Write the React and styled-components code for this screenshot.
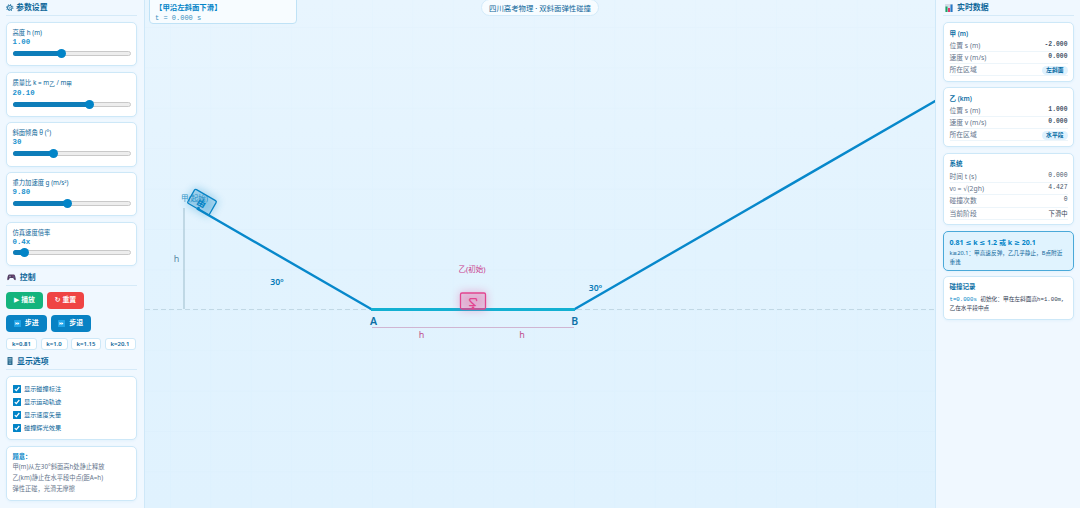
import React, { useState } from "react";
import styled, { createGlobalStyle, css } from "styled-components";

const sans = `"Noto Sans", "DejaVu Sans", "Noto Sans CJK SC", sans-serif`;
const mono = `"Liberation Mono", "Noto Sans CJK SC", monospace`;

const GlobalStyle = createGlobalStyle`
  * {
    box-sizing: border-box;
  }

  body {
    margin: 0;
    overflow: hidden;
    font-family: ${sans};
    color: #0c6699;
  }
`;

const Page = styled.div`
  display: grid;
  grid-template-columns: 145px 1fr 145px;
  height: 508px;
  background: #e3f3fe;
`;

const Panel = styled.aside`
  display: flex;
  flex-direction: column;
  min-width: 0;
  height: 508px;
  overflow: hidden;
  background: #f0f8ff;
  padding: ${(p) => (p.$right ? "0 6px 0 7px" : "0 7.5px 0 6px")};
  border-right: ${(p) => (p.$right ? "none" : "1px solid #cfe8f8")};
  border-left: ${(p) => (p.$right ? "1px solid #cfe8f8" : "none")};
  box-shadow: 0 0 6px rgba(2, 132, 199, 0.06);
`;

const Heading = styled.h2`
  display: flex;
  align-items: center;
  gap: ${(p) => p.$gap || 4}px;
  flex: none;
  height: ${(p) => p.$height || 16}px;
  margin: 0 0 6px;
  padding-top: ${(p) => p.$drop || 0}px;
  padding-left: ${(p) => p.$indent || 0}px;
  border-bottom: 1px solid #d5eaf8;
  font-size: 7.9px;
  line-height: 13px;
  font-weight: 600;
  color: #0c6699;

  svg {
    flex: none;
  }
`;

const Card = styled.section`
  flex: none;
  height: ${(p) => p.$height}px;
  margin-bottom: ${(p) => p.$gap || 6}px;
  padding: 0 5.5px;
  border: 1px solid #cde8f8;
  border-radius: 5px;
  background: #fff;
  box-shadow: 0 1px 3px rgba(2, 132, 199, 0.06);
`;

const Label = styled.div`
  padding-top: 5px;
  height: ${(p) => (p.$tall ? 16.5 : 15)}px;
  font-size: 6.3px;
  line-height: 10px;
  white-space: nowrap;

  sub {
    font-size: 5.6px;
    line-height: 0;
    vertical-align: -1.3px;
  }
`;

const Value = styled.div`
  height: 9px;
  font: 600 7.4px/9px ${mono};
  color: #2292cd;
`;

const Track = styled.div`
  position: relative;
  width: 118px;
  height: 5px;
  margin-top: 3.5px;
  border: 1px solid #c9c9c9;
  border-radius: 3px;
  background: #ededed;
`;

const Fill = styled.div`
  height: 5px;
  margin: -1px;
  border-radius: 3px;
  background: #0e7db9;
`;

const Thumb = styled.div`
  position: absolute;
  top: -3px;
  width: 9px;
  height: 9px;
  margin-left: -5px;
  border-radius: 50%;
  background: #0284c7;
`;

const ButtonRow = styled.div`
  display: flex;
  flex: none;
  gap: 4px;
  margin-bottom: 6px;
`;

const colors = { play: "#14b47d", reset: "#ef4444", step: "#0882c4" };

const Button = styled.button`
  display: flex;
  align-items: center;
  justify-content: center;
  gap: ${(p) => (p.$kind === "step" ? 4 : 2)}px;
  width: ${(p) => (p.$kind === "step" ? 40.5 : 37)}px;
  height: 17px;
  padding: 0;
  border: none;
  border-radius: 4px;
  background: ${(p) => colors[p.$kind]};
  color: #fff;
  font: 600 6.9px/12px ${sans};
  white-space: nowrap;
`;

const Presets = styled.div`
  display: grid;
  grid-template-columns: 31px 27px 30px 31px;
  gap: 3.5px;
  flex: none;
`;

const Preset = styled.button`
  height: 12.5px;
  padding: 0;
  border: 1px solid #cde8f8;
  border-radius: 3px;
  background: #fff;
  color: #0c6699;
  font: 600 6px/10px ${sans};
  white-space: nowrap;
`;

const Options = styled(Card)`
  display: flex;
  flex-direction: column;
  gap: 5px;
  padding-top: 7.5px;
`;

const Option = styled.label`
  display: flex;
  align-items: center;
  gap: 3.5px;
  height: 8px;
  font-size: 6.2px;
  line-height: 8px;
`;

const Check = styled.span`
  display: grid;
  place-items: center;
  width: 8px;
  height: 8px;
  border-radius: 1px;
  background: ${(p) => (p.$on ? "#0284c7" : "#fff")};
  box-shadow: inset 0 0 0 1px #0284c7;
`;

const Note = styled(Card)`
  padding-top: 4.5px;
  font-size: 6.25px;
  line-height: 10.7px;
  color: #64748b;
  white-space: nowrap;

  b {
    color: #0284c7;
  }
`;

const CardTitle = styled.h3`
  margin: 0;
  padding-top: 5.5px;
  height: 17px;
  font-size: 6.5px;
  line-height: 10px;
  font-weight: 600;
  color: #0c6fa5;
`;

const Row = styled.div`
  display: flex;
  justify-content: space-between;
  height: ${(p) => p.$height || 12}px;
  border-bottom: 1px solid #edf5fa;
  font-size: 6.8px;
  line-height: 12.5px;
  color: #64748b;
  white-space: nowrap;

  small {
    font-size: 5px;
  }
`;

const Reading = styled.span`
  font: 600 6.4px/9px ${mono};
  color: #475569;
  ${(p) =>
    p.$light &&
    css`
      font-weight: 400;
    `}
`;

const Phase = styled.span`
  font-size: 6.3px;
  line-height: 12px;
  color: #334155;
`;

const Badge = styled.span`
  height: 9px;
  margin-top: 1.5px;
  padding: 0 4px;
  border-radius: 5px;
  background: #dff2fe;
  color: #0369a1;
  font-size: 5.8px;
  line-height: 9px;
  font-weight: 600;
`;

const Verdict = styled(Card)`
  padding-top: 5px;
  border-color: #4aa9d9;
  background: #e0f3fe;
  font-size: 5.65px;
  line-height: 8.2px;

  h3 {
    margin: 0 0 1px;
    font-size: 7.05px;
    line-height: 11px;
    color: #0284c7;
    white-space: nowrap;
  }
`;

const Log = styled.p`
  margin: 2.5px 0 0;
  font: 5.7px/8.3px ${mono};
  color: #334155;
  white-space: nowrap;

  span {
    color: #0284c7;
  }
`;

const Stage = styled.main`
  position: relative;
  min-width: 0;
`;

const Scene = styled.svg`
  display: block;
  font-family: ${sans};
`;

const PhaseBox = styled.div`
  position: absolute;
  top: -4px;
  left: 4px;
  width: 148px;
  height: 28px;
  padding: 4px 5px 0;
  border: 1px solid #bfe2f6;
  border-radius: 4px;
  background: #f7fcff;
  font-size: 7.4px;
  line-height: 12px;
  font-weight: 700;
  color: #0284c7;

  div {
    padding-top: 1px;
    font: 7px/9px ${mono};
    color: #3a8fbd;
  }
`;

const TopicPill = styled.div`
  position: absolute;
  top: -1px;
  left: 336px;
  width: 118px;
  height: 17px;
  border: 1px solid #d3ebfa;
  border-radius: 9px;
  background: #f7fcff;
  text-align: center;
  font-size: 7.4px;
  line-height: 16px;
  white-space: nowrap;
`;

const GearIcon = () => (
  <svg width="7.500" height="7.500" viewBox="0 0 14 14" fill="none" stroke="#0c6699">
    <circle cx="7" cy="7" r="4.300" strokeWidth="1.800" />
    <circle cx="7" cy="7" r="6" strokeWidth="1.800" strokeDasharray="2 2.700" />
    <circle cx="7" cy="7" r="1.300" strokeWidth="1" />
  </svg>
);

const GamepadIcon = () => (
  <svg width="9" height="8" viewBox="0 0 18 16">
    <path
      d="M4 3h10c2 0 3 5 3.500 9 .3 3-2.500 3-4 0l-1-2h-7l-1 2c-1.500 3-4.300 3-4 0C1 8 2 3 4 3z"
      fill="#513b62"
    />
    <path d="M4 7h4M6 5v4" stroke="#a7a0b4" strokeWidth="1.200" />
    <circle cx="12" cy="6" r="1" fill="#d45687" />
    <circle cx="14" cy="8" r="1" fill="#5d94ce" />
  </svg>
);

const SliderIcon = () => (
  <svg width="6" height="8" viewBox="0 0 12 16">
    <rect x="1" y="0" width="10" height="16" rx="1" fill="#326f91" />
    <path d="M3 3h6M3 6h6" stroke="#b8d9e9" strokeWidth="1.300" />
    <path d="M4 10h4M4 13h4" stroke="#80b4d0" strokeWidth="1.500" />
  </svg>
);

const ChartIcon = () => (
  <svg width="8" height="8" viewBox="0 0 16 16">
    <rect width="16" height="16" rx="1" fill="#d3dde8" />
    <rect x="1" y="5" width="4" height="11" fill="#18a565" />
    <rect x="6" y="8" width="4" height="8" fill="#e23b6d" />
    <rect x="11" y="1" width="4" height="15" fill="#2478ca" />
  </svg>
);

const StepIcon = () => (
  <svg width="7" height="7" viewBox="0 0 14 14">
    <rect width="14" height="14" rx="1" fill="#20a5e9" />
    <path d="M3 4l4 3-4 3zM7 4l4 3-4 3z" fill="#fff" />
  </svg>
);

const sliders = [
  { label: "高度 h (m)", value: "1.00", at: 41.5, height: 44, gap: 5.5 },
  {
    label: (
      <>
        质量比 k = m<sub>乙</sub> / m<sub>甲</sub>
      </>
    ),
    tall: true,
    value: "20.10",
    at: 66.3,
    height: 45.5,
    gap: 5,
  },
  { label: "斜面倾角 θ (°)", value: "30", at: 34.5, height: 44.5, gap: 5.5 },
  { label: "重力加速度 g (m/s²)", value: "9.80", at: 47, height: 44, gap: 5.5 },
  { label: "仿真速度倍率", value: "0.4x", at: 9.5, height: 44, gap: 4 },
];

const optionNames = ["显示碰撞标注", "显示运动轨迹", "显示速度矢量", "碰撞辉光效果"];

const bodies = [
  { name: "甲 (m)", s: "-2.000", v: "0.000", zone: "左斜面", gap: 5.5 },
  { name: "乙 (km)", s: "1.000", v: "0.000", zone: "水平段", gap: 6.3 },
];

function Block({ x, y, angle, color, label }) {
  return (
    <g transform={`translate(${x} ${y}) rotate(${angle})`}>
      <rect x="-14" y="-18" width="28" height="20" rx="4" fill={color} opacity="0.3" filter="url(#glow)" />
      <rect x="-12.500" y="-16" width="25" height="16" rx="1.500" fill={color} fillOpacity="0.14" stroke={color} strokeWidth="1.300" />
      <text transform="translate(0 -7) scale(1 -1)" y="3.500" textAnchor="middle" fontSize="9.500" fontWeight="600" fill={color}>
        {label}
      </text>
      <circle cy="-1" r="1.400" fill={color} />
    </g>
  );
}

function Track2D() {
  return (
    <Scene width="790" height="508" viewBox="145 0 790 508">
      <defs>
        <linearGradient id="sky" x1="0" y1="0" x2="0" y2="1">
          <stop offset="0" stopColor="#e8f5fe" />
          <stop offset="0.5" stopColor="#e2f3fe" />
          <stop offset="1" stopColor="#e0f2fe" />
        </linearGradient>
        <pattern id="grid" width="40.400" height="40.400" patternUnits="userSpaceOnUse" x="170" y="27">
          <path d="M0 0H40.400M0 0V40.400" stroke="#0284c7" strokeOpacity="0.018" fill="none" />
        </pattern>
        <filter id="glow" x="-100%" y="-100%" width="300%" height="300%">
          <feGaussianBlur stdDeviation="4.500" />
        </filter>
      </defs>
      <rect x="145" width="790" height="508" fill="url(#sky)" />
      <rect x="145" width="790" height="508" fill="url(#grid)" />
      <path d="M145 309.500H935" stroke="#bdd5e2" strokeWidth="0.900" strokeDasharray="5 3" />
      <path d="M184 208V309" stroke="#9dbdcc" />
      <path d="M372 327.500H574" stroke="#d0b5d2" />
      <path d="M197 208.500L372 309.500M574 309.500L937 100" stroke="#0788cb" strokeWidth="2.400" fill="none" />
      <path d="M371 309.500H575" stroke="#13b0d2" strokeWidth="3" />
      <text x="181" y="201" fontSize="7.500" fill="#3796c8">甲(起始)</text>
      <Block x={198} y={209} angle={30} color="#0784c5" label="甲" />
      <Block x={473} y={309} angle={0} color="#e2448f" label="乙" />
      <text x="472" y="272" textAnchor="middle" fontSize="7.500" fill="#ca3f8d">乙(初始)</text>
      <g fontSize="8.700" fontWeight="600" fill="#087bb8" textAnchor="middle">
        <text x="277" y="284.500">30°</text>
        <text x="595.500" y="290.500">30°</text>
        <text x="373.500" y="324.800" fontSize="10.500" fill="#0c6fa5">A</text>
        <text x="574.700" y="324.800" fontSize="10.500" fill="#0c6fa5">B</text>
      </g>
      <g fontSize="9" textAnchor="middle">
        <text x="176.500" y="262" fill="#5b8ca6">h</text>
        <text x="421.500" y="338" fill="#c0528f">h</text>
        <text x="522" y="338" fill="#c0528f">h</text>
      </g>
    </Scene>
  );
}

export default function App() {
  const [shown, setShown] = useState([true, true, true, true]);
  const toggle = (i) => setShown(shown.map((on, n) => (n === i ? !on : on)));

  return (
    <>
      <GlobalStyle />
      <Page>
        <Panel>
          <Heading $gap={2.5}>
            <GearIcon />
            参数设置
          </Heading>
          {sliders.map((s) => (
            <Card key={s.value} $height={s.height} $gap={s.gap}>
              <Label $tall={s.tall}>{s.label}</Label>
              <Value>{s.value}</Value>
              <Track>
                <Fill style={{ width: `${s.at}%` }} />
                <Thumb style={{ left: `${s.at}%` }} />
              </Track>
            </Card>
          ))}
          <Heading $indent={0.8}>
            <GamepadIcon />
            控制
          </Heading>
          <ButtonRow>
            <Button $kind="play">▶ 播放</Button>
            <Button $kind="reset">↻ 重置</Button>
          </ButtonRow>
          <ButtonRow>
            <Button $kind="step">
              <StepIcon />
              步进
            </Button>
            <Button $kind="step">
              <StepIcon />
              步退
            </Button>
          </ButtonRow>
          <Presets>
            {["0.81", "1.0", "1.15", "20.1"].map((k) => (
              <Preset key={k}>k={k}</Preset>
            ))}
          </Presets>
          <Heading $height={20} $indent={1} $drop={3}>
            <SliderIcon />
            显示选项
          </Heading>
          <Options $height={64}>
            {optionNames.map((name, i) => (
              <Option key={name} onClick={() => toggle(i)}>
                <Check $on={shown[i]}>
                  <svg width="8" height="8" viewBox="0 0 8 8">
                    <path d="M1.800 4.200l1.500 1.500 3-3.700" fill="none" stroke="#fff" strokeWidth="1.200" />
                  </svg>
                </Check>
                {name}
              </Option>
            ))}
          </Options>
          <Note $height={54.5}>
            <b>题意：</b>
            <br />
            甲(m)从左30°斜面高h处静止释放
            <br />
            乙(km)静止在水平段中点(距A=h)
            <br />
            弹性正碰，光滑无摩擦
          </Note>
        </Panel>

        <Stage>
          <Track2D />
          <PhaseBox>
            【甲沿左斜面下滑】
            <div>t = 0.000 s</div>
          </PhaseBox>
          <TopicPill>四川高考物理 · 双斜面弹性碰撞</TopicPill>
        </Stage>

        <Panel $right>
          <Heading $indent={2}>
            <ChartIcon />
            实时数据
          </Heading>
          {bodies.map((b) => (
            <Card key={b.name} $height={59.5} $gap={b.gap}>
              <CardTitle>{b.name}</CardTitle>
              <Row>
                位置 s (m)<Reading>{b.s}</Reading>
              </Row>
              <Row>
                速度 v (m/s)<Reading>{b.v}</Reading>
              </Row>
              <Row>
                所在区域<Badge>{b.zone}</Badge>
              </Row>
            </Card>
          ))}
          <Card $height={72.5}>
            <CardTitle>系统</CardTitle>
            <Row $height={12.3}>
              时间 t (s)<Reading $light>0.000</Reading>
            </Row>
            <Row $height={12.3}>
              <span>
                v<small>0</small> = √(2gh)
              </span>
              <Reading $light>4.427</Reading>
            </Row>
            <Row $height={12.3}>
              碰撞次数<Reading $light>0</Reading>
            </Row>
            <Row $height={12.3}>
              当前阶段<Phase>下滑中</Phase>
            </Row>
          </Card>
          <Verdict $height={39.7} $gap={5}>
            <h3>0.81 ≤ k ≤ 1.2 或 k ≥ 20.1</h3>
            k≥20.1：甲高速反弹，乙几乎静止，B点附近重逢
          </Verdict>
          <Card $height={44.5}>
            <CardTitle>碰撞记录</CardTitle>
            <Log>
              <span>t=0.000s</span> 初始化：甲在左斜面高h=1.00m,
              <br />
              乙在水平段中点
            </Log>
          </Card>
        </Panel>
      </Page>
    </>
  );
}
